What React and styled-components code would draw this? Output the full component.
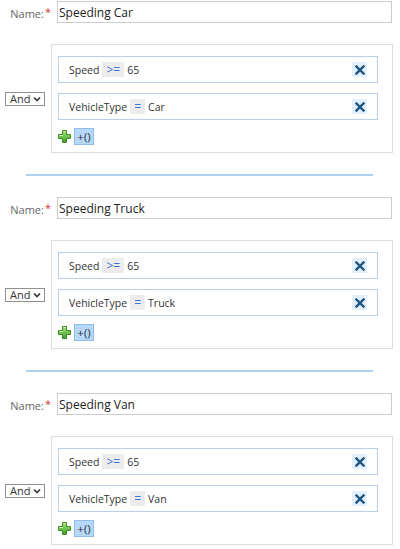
import React from "react";
import styled, { createGlobalStyle } from "styled-components";

const Global = createGlobalStyle`
  html, body { margin: 0; padding: 0; background: #fff; }
  body { font-family: "Open Sans", "Noto Sans", sans-serif; font-size: 10.5px; color: #333; }
`;

const rules = [
  { name: "Speeding Car", type: "Car" },
  { name: "Speeding Truck", type: "Truck" },
  { name: "Speeding Van", type: "Van" },
];

const Page = styled.div`
  display: flex;
  flex-direction: column;
  padding-top: 1px;
`;

const Rule = styled.section`
  display: flex;
  flex-direction: column;
`;

const NameRow = styled.div`
  display: flex;
  align-items: center;
  height: 22px;
`;

const Label = styled.label`
  width: 51px;
  padding-right: 6px;
  text-align: right;
  color: #666;
  font-size: 11px;
  box-sizing: content-box;
`;

const Required = styled.span`
  color: #e0342b;
  margin-left: 1px;
  vertical-align: 2px;
`;

const NameInput = styled.input`
  box-sizing: border-box;
  width: 335px;
  height: 22px;
  border: 1px solid #ccc;
  border-radius: 0;
  padding: 0 1px;
  font: inherit;
  font-size: 12px;
  color: #222;
  outline: none;
`;

const GroupRow = styled.div`
  display: flex;
  align-items: center;
  margin-top: 21px;
`;

const Combinator = styled.div`
  width: 51px;
  display: flex;
  padding-left: 5px;
  box-sizing: border-box;
`;

const Select = styled.div`
  box-sizing: border-box;
  width: 40px;
  height: 14px;
  border: 1px solid #8f8f8f;
  display: flex;
  align-items: center;
  justify-content: space-between;
  padding: 0 3px 0 4px;
  font-size: 11px;
  color: #333;
`;

const Group = styled.div`
  box-sizing: border-box;
  width: 342px;
  border: 1px solid #dcdcdc;
  padding: 11px 14px 7px 6px;
  display: flex;
  flex-direction: column;
  gap: 10px;
`;

const Condition = styled.div`
  box-sizing: border-box;
  height: 27px;
  border: 1px solid #b9cfe9;
  display: flex;
  align-items: center;
  padding: 0 10px 0 10px;
  gap: 3px;
  font-size: 10.5px;
`;

const Field = styled.span`
  color: #333;
`;

const Operator = styled.span`
  background: #ececec;
  color: #3d6fd9;
  padding: 0 4px;
  height: 15px;
  line-height: 15px;
  font-size: 12px;
`;

const Spacer = styled.span`
  flex: 1;
`;

const Remove = styled.button`
  width: 15px;
  height: 15px;
  border: 0;
  padding: 0;
  background: #e3effa;
  display: flex;
  align-items: center;
  justify-content: center;
`;

const Actions = styled.div`
  display: flex;
  align-items: center;
  gap: 3px;
  margin-top: -2px;
`;

const SubGroupButton = styled.button`
  box-sizing: border-box;
  width: 20px;
  height: 17px;
  border: 1px solid #8fbde8;
  background: #b5d8fb;
  padding: 0;
  font: inherit;
  font-size: 11.5px;
  color: #333;
`;

const Divider = styled.hr`
  box-sizing: border-box;
  width: 347px;
  margin: 21px 0 21px 26px;
  height: 2px;
  border: 0;
  background: #afcfee;
`;

const CloseIcon = () => (
  <svg width="10" height="10" viewBox="0 0 10 10">
    <path d="M1.5 1.5 L8.5 8.5 M8.5 1.5 L1.5 8.5" stroke="#1d5482" strokeWidth="2.4" strokeLinecap="square" />
  </svg>
);

const PlusIcon = () => (
  <svg width="13" height="13" viewBox="0 0 13 13">
    <defs>
      <linearGradient id="plusFill" x1="0" y1="0" x2="0" y2="1">
        <stop offset="0" stopColor="#a6e676" />
        <stop offset="1" stopColor="#3c9e28" />
      </linearGradient>
    </defs>
    <path
      d="M4.5 0.5 H8.5 V4.5 H12.5 V8.5 H8.5 V12.5 H4.5 V8.5 H0.5 V4.5 H4.5 Z"
      fill="url(#plusFill)"
      stroke="#3a8e25"
      strokeWidth="1"
    />
    <path d="M5.5 1.5 H7.5 M1.5 5.5 H5" stroke="#d8f7c0" strokeWidth="1" />
  </svg>
);

const Chevron = () => (
  <svg width="8" height="6" viewBox="0 0 8 6">
    <path d="M1 1.5 L4 4.5 L7 1.5" fill="none" stroke="#333" strokeWidth="1.6" />
  </svg>
);

const RuleEditor = ({ name, type }) => (
  <Rule>
    <NameRow>
      <Label>
        Name:<Required>*</Required>
      </Label>
      <NameInput defaultValue={name} />
    </NameRow>
    <GroupRow>
      <Combinator>
        <Select>
          And <Chevron />
        </Select>
      </Combinator>
      <Group>
        <Condition>
          <Field>Speed</Field>
          <Operator>&gt;=</Operator>
          <Field>65</Field>
          <Spacer />
          <Remove aria-label="Remove">
            <CloseIcon />
          </Remove>
        </Condition>
        <Condition>
          <Field>VehicleType</Field>
          <Operator>=</Operator>
          <Field>{type}</Field>
          <Spacer />
          <Remove aria-label="Remove">
            <CloseIcon />
          </Remove>
        </Condition>
        <Actions>
          <PlusIcon />
          <SubGroupButton>+()</SubGroupButton>
        </Actions>
      </Group>
    </GroupRow>
  </Rule>
);

export default function App() {
  return (
    <Page>
      <Global />
      {rules.map((r, i) => (
        <React.Fragment key={r.name}>
          {i > 0 && <Divider />}
          <RuleEditor name={r.name} type={r.type} />
        </React.Fragment>
      ))}
    </Page>
  );
}
